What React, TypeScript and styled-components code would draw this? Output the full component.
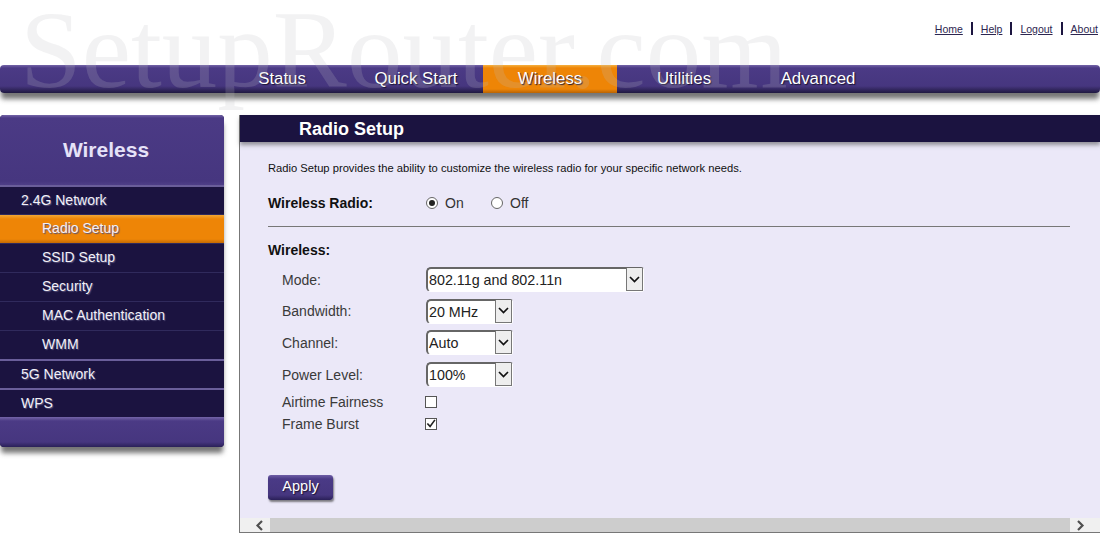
import React from "react";
import styled, { createGlobalStyle } from "styled-components";

const links = ["Home", "Help", "Logout", "About"];
const tabs = ["Status", "Quick Start", "Wireless", "Utilities", "Advanced"];
const sideItems = [
  { label: "2.4G Network", sub: false, active: false, major: true },
  { label: "Radio Setup", sub: true, active: true, major: false },
  { label: "SSID Setup", sub: true, active: false, major: false },
  { label: "Security", sub: true, active: false, major: false },
  { label: "MAC Authentication", sub: true, active: false, major: false },
  { label: "WMM", sub: true, active: false, major: false },
  { label: "5G Network", sub: false, active: false, major: true },
  { label: "WPS", sub: false, active: false, major: true },
];
const selects = [
  { label: "Mode:", value: "802.11g and 802.11n", width: 218 },
  { label: "Bandwidth:", value: "20 MHz", width: 87 },
  { label: "Channel:", value: "Auto", width: 87 },
  { label: "Power Level:", value: "100%", width: 87 },
];

export default function App() {
  return (
    <Page>
      <GlobalStyle />
      <Watermark>SetupRouter.com</Watermark>
      <TopLinks>
        {links.map((l) => (
          <TopLink key={l} href="#">
            {l}
          </TopLink>
        ))}
      </TopLinks>
      <Nav>
        {tabs.map((t) => (
          <Tab key={t} $active={t === "Wireless"}>
            {t}
          </Tab>
        ))}
      </Nav>
      <Body>
        <Sidebar>
          <SideHeader>Wireless</SideHeader>
          {sideItems.map((item) => (
            <SideItem key={item.label} $sub={item.sub} $active={item.active} $major={item.major}>
              {item.label}
            </SideItem>
          ))}
          <SideFooter />
        </Sidebar>
        <Panel>
          <PanelTitle>Radio Setup</PanelTitle>
          <PanelBody>
            <Intro>
              Radio Setup provides the ability to customize the wireless radio for your specific
              network needs.
            </Intro>
            <RadioRow>
              <StrongLabel>Wireless Radio:</StrongLabel>
              <RadioOption>
                <Radio $checked />
                On
              </RadioOption>
              <RadioOption>
                <Radio />
                Off
              </RadioOption>
            </RadioRow>
            <Divider />
            <SectionLabel>Wireless:</SectionLabel>
            {selects.map((s) => (
              <FieldRow key={s.label}>
                <FieldLabel>{s.label}</FieldLabel>
                <SelectBox $width={s.width}>
                  <SelectValue>{s.value}</SelectValue>
                  <SelectArrow>
                    <svg width="11" height="7" viewBox="0 0 11 7">
                      <path d="M1 1l4.5 4.5L10 1" fill="none" stroke="#111" strokeWidth="1.7" />
                    </svg>
                  </SelectArrow>
                </SelectBox>
              </FieldRow>
            ))}
            <CheckRow>
              <FieldLabel>Airtime Fairness</FieldLabel>
              <CheckBox />
            </CheckRow>
            <CheckRow>
              <FieldLabel>Frame Burst</FieldLabel>
              <CheckBox>
                <svg width="11" height="11" viewBox="0 0 11 11">
                  <path d="M1.5 5.5l3 3.2L9.8 1.5" fill="none" stroke="#222" strokeWidth="1.8" />
                </svg>
              </CheckBox>
            </CheckRow>
            <ApplyButton>Apply</ApplyButton>
          </PanelBody>
          <ScrollBar>
            <ScrollArrow $side="left">
              <svg width="9" height="11" viewBox="0 0 9 11">
                <path d="M7 1L2.5 5.5 7 10" fill="none" stroke="#505050" strokeWidth="2.2" />
              </svg>
            </ScrollArrow>
            <ScrollThumb />
            <ScrollArrow $side="right">
              <svg width="9" height="11" viewBox="0 0 9 11">
                <path d="M2 1l4.5 4.5L2 10" fill="none" stroke="#505050" strokeWidth="2.2" />
              </svg>
            </ScrollArrow>
          </ScrollBar>
        </Panel>
      </Body>
    </Page>
  );
}

const GlobalStyle = createGlobalStyle`
  html, body {
    margin: 0;
    padding: 0;
    background: #fff;
    overflow: hidden;
  }
  body {
    font-family: "Liberation Sans", Arial, sans-serif;
  }
`;

const Page = styled.div`
  position: relative;
  width: 1100px;
  height: 533px;
  overflow: hidden;
`;

const Watermark = styled.div`
  position: absolute;
  left: 20px;
  top: 0;
  z-index: 5;
  font-family: "Liberation Serif", serif;
  font-size: 111px;
  line-height: 100px;
  white-space: nowrap;
  color: rgba(190, 190, 195, 0.2);
  pointer-events: none;
`;

const TopLinks = styled.div`
  height: 65px;
  box-sizing: border-box;
  padding: 22px 2px 0 0;
  display: flex;
  justify-content: flex-end;
  align-items: flex-start;
`;

const TopLink = styled.a`
  font-size: 10.5px;
  line-height: 14px;
  color: #2c2650;
  padding: 0 8px;
  border-left: 2px solid #1c1540;
  height: 13px;

  &:first-child {
    border-left: none;
  }
  &:last-child {
    padding-right: 0;
  }
`;

const Nav = styled.div`
  height: 28px;
  padding-left: 215px;
  display: flex;
  border-radius: 4px;
  background: linear-gradient(#7464a8 0, #4b3a85 3px, #46367f 21px, #1f1840 28px);
  box-shadow: 0 7px 5px -1px rgba(60, 60, 60, 0.7);
`;

const Tab = styled.div<{ $active: boolean }>`
  width: 134px;
  text-align: center;
  font-size: 16.8px;
  line-height: 27px;
  color: #fff;
  text-shadow: 1px 1px 1px #1a1433;
  background: ${(p) =>
    p.$active ? "linear-gradient(#f5b040 0, #ee8506 3px, #ee8506 24px, #b96404 28px)" : "none"};
`;

const Body = styled.div`
  margin-top: 22px;
  display: flex;
  gap: 15px;
`;

const Sidebar = styled.div`
  width: 224px;
  height: 332px;
  flex: none;
  display: flex;
  flex-direction: column;
  background: #1b1340;
  border-radius: 4px;
  box-shadow: 0 7px 5px -1px rgba(60, 60, 60, 0.7);
`;

const SideHeader = styled.div`
  height: 70px;
  flex: none;
  box-sizing: border-box;
  padding-right: 12px;
  text-align: center;
  line-height: 70px;
  font-size: 21px;
  font-weight: bold;
  color: #e6e2f8;
  border-radius: 4px 4px 0 0;
  background: linear-gradient(#7464a8 0, #4b3a85 3px, #46367f 66px, #4f3f88 70px);
`;

const SideItem = styled.div<{ $sub: boolean; $active: boolean; $major: boolean }>`
  height: 29px;
  flex: none;
  box-sizing: border-box;
  padding-left: ${(p) => (p.$sub ? "42px" : "21px")};
  font-size: 14px;
  line-height: ${(p) => (p.$major ? "26px" : "27px")};
  color: #f2f0f8;
  text-shadow: 1px 1px 1px #55507a;
  border-top: ${(p) => (p.$major ? "2px solid #6a5e9a" : "1px solid #302a5c")};
  background: ${(p) =>
    p.$active ? "linear-gradient(#f2a634 0, #ee8506 4px, #ee8506 24px, #b96404 29px)" : "#1b1340"};
`;

const SideFooter = styled.div`
  flex: 1;
  border-radius: 0 0 4px 4px;
  background: linear-gradient(#7464a8 0, #4b3a85 4px, #46367f 25px, #2a2058 30px);
`;

const Panel = styled.div`
  position: relative;
  flex: 1;
  height: 418px;
  box-sizing: border-box;
  border-left: 1px solid #777;
  border-bottom: 1px solid #777;
  background: #ebe8f8;
  display: flex;
  flex-direction: column;
`;

const PanelTitle = styled.div`
  height: 27px;
  flex: none;
  padding-left: 59px;
  font-size: 18px;
  font-weight: bold;
  line-height: 28px;
  color: #fff;
  background: #1b1340;
  box-shadow: 0 3px 4px rgba(60, 60, 60, 0.5);
`;

const PanelBody = styled.div`
  flex: 1;
  padding: 19px 30px 0 28px;
  display: flex;
  flex-direction: column;
  align-items: flex-start;
  color: #333;
`;

const Intro = styled.div`
  font-size: 11.2px;
  line-height: 14px;
  color: #111;
`;

const RadioRow = styled.div`
  margin-top: 19px;
  height: 18px;
  display: flex;
  align-items: center;
`;

const StrongLabel = styled.div`
  width: 158px;
  font-size: 14px;
  font-weight: bold;
  color: #111;
`;

const RadioOption = styled.div`
  width: 65px;
  display: flex;
  align-items: center;
  gap: 7px;
  font-size: 14px;
  color: #333;
`;

const Radio = styled.span<{ $checked?: boolean }>`
  width: 12px;
  height: 12px;
  box-sizing: border-box;
  border-radius: 50%;
  border: 1px solid #666;
  background: #fff;
  display: flex;
  align-items: center;
  justify-content: center;

  &::after {
    content: "";
    width: 6px;
    height: 6px;
    border-radius: 50%;
    background: ${(p) => (p.$checked ? "#222" : "transparent")};
  }
`;

const Divider = styled.div`
  margin-top: 14px;
  width: 100%;
  height: 1px;
  background: #777;
`;

const SectionLabel = styled.div`
  margin-top: 15px;
  font-size: 14px;
  line-height: 17px;
  font-weight: bold;
  color: #111;
`;

const FieldRow = styled.div`
  margin-top: 7px;
  height: 27px;
  display: flex;
  align-items: center;
  padding-left: 14px;

  & + & {
    margin-top: 4.7px;
  }
`;

const FieldLabel = styled.div`
  width: 144px;
  font-size: 14px;
  color: #3a3a3a;
`;

const SelectBox = styled.div<{ $width: number }>`
  width: ${(p) => p.$width}px;
  height: 25px;
  box-sizing: border-box;
  display: flex;
  background: #fff;
  border: 1px solid #fff;
  border-top: 2px solid #666;
  border-left: 2px solid #666;
  border-radius: 5px 3px 3px 5px;
`;

const SelectValue = styled.div`
  flex: 1;
  padding-left: 1px;
  font-size: 14.3px;
  line-height: 22px;
  color: #222;
  white-space: nowrap;
`;

const SelectArrow = styled.div`
  width: 15px;
  margin-top: -1px;
  border: 1px solid #777;
  border-top: none;
  background: #eeeeee;
  display: flex;
  align-items: center;
  justify-content: center;
`;

const CheckRow = styled.div`
  margin-top: 4px;
  height: 19px;
  display: flex;
  align-items: center;
  padding-left: 14px;

  & + & {
    margin-top: 3px;
  }
`;

const CheckBox = styled.div`
  width: 12px;
  height: 12px;
  margin-left: -1px;
  box-sizing: border-box;
  border: 1px solid #555;
  background: #fff;
  display: flex;
  align-items: center;
  justify-content: center;
`;

const ApplyButton = styled.div`
  margin-top: 42px;
  width: 65px;
  height: 25px;
  box-sizing: border-box;
  text-align: center;
  font-size: 14.5px;
  line-height: 23px;
  color: #fff;
  border-radius: 3px;
  text-shadow: 1px 1px 1px #1a1433;
  background: linear-gradient(#6e5ea6 0, #4a3a86 4px, #46367f 20px, #2a2058 25px);
  box-shadow: 1px 2px 2px rgba(50, 50, 50, 0.6);
`;

const ScrollBar = styled.div`
  height: 14px;
  flex: none;
  display: flex;
  background: #f0f0f0;
`;

const ScrollArrow = styled.div<{ $side: "left" | "right" }>`
  width: 30px;
  box-sizing: border-box;
  display: flex;
  align-items: center;
  justify-content: ${(p) => (p.$side === "left" ? "flex-start" : "flex-end")};
  padding: ${(p) => (p.$side === "left" ? "0 0 0 15px" : "0 15px 0 0")};
`;

const ScrollThumb = styled.div`
  flex: 1;
  background: #cdcdcd;
`;
